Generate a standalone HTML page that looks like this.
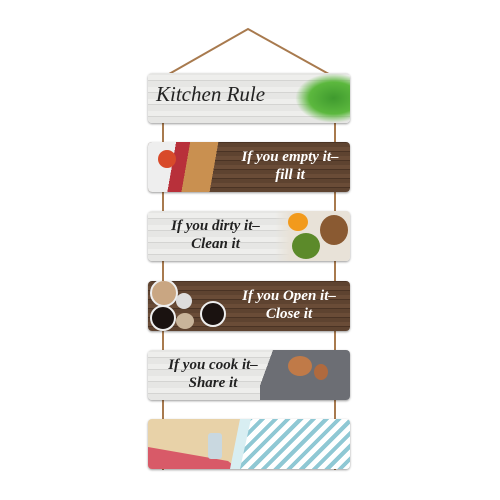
<!DOCTYPE html>
<html><head><style>
body{margin:0;width:500px;height:500px;background:#fff;position:relative;overflow:hidden;font-family:"Liberation Serif",serif;}
.b{position:absolute;left:148px;width:202px;height:50px;border-radius:4px;overflow:hidden;box-shadow:0 1px 2px rgba(0,0,0,.4);}
.r{position:absolute;width:2px;background:#a87a4e;}
.t{position:absolute;font-style:italic;font-weight:bold;text-align:center;line-height:18px;font-size:15px;}
.light{background:repeating-linear-gradient(0deg,#e6e6e4 0 6px,#d4d4d2 6px 7px,#eeeeec 7px 12px);}
.dark{background:repeating-linear-gradient(0deg,#5e4330 0 4px,#4a3324 4px 5px,#6a4c37 5px 9px);}
</style></head><body>
<svg style="position:absolute;left:0;top:0" width="500" height="500"><polyline points="162,78 248,29 336,78" fill="none" stroke="#a87a4e" stroke-width="2"/></svg>
<div class="r" style="left:162px;top:120px;height:350px"></div>
<div class="r" style="left:334px;top:120px;height:350px"></div>

<div class="b light" style="top:73px">
 <div style="position:absolute;right:0;top:0;width:55px;height:50px;background:radial-gradient(ellipse at 70% 50%,#3f9a2e 0,#5cb83e 45%,transparent 70%)"></div>
 <div class="t" style="left:8px;top:12px;font-size:21px;color:#222;font-weight:normal">Kitchen Rule</div>
</div>
<div class="b dark" style="top:142px">
 <div style="position:absolute;left:0;top:0;width:85px;height:50px;background:linear-gradient(100deg,#eee 0 30%,#b8303a 30% 45%,#c99050 45% 75%,transparent 75%)"></div>
 <div style="position:absolute;left:10px;top:8px;width:18px;height:18px;border-radius:50%;background:#d84a2a"></div>
 <div class="t" style="left:82px;width:120px;top:6px;color:#fff">If you empty it–<br>fill it</div>
</div>
<div class="b light" style="top:211px">
 <div style="position:absolute;right:0;top:0;width:75px;height:50px;background:linear-gradient(90deg,transparent 0,#e8e2d8 20%)"></div>
 <div style="position:absolute;right:42px;top:2px;width:20px;height:18px;border-radius:50%;background:#f29a1c"></div>
 <div style="position:absolute;right:30px;top:22px;width:28px;height:26px;border-radius:50%;background:#5c8a2a"></div>
 <div style="position:absolute;right:2px;top:4px;width:28px;height:30px;border-radius:50%;background:#8a5a32"></div>
 <div class="t" style="left:0;width:135px;top:6px;color:#222">If you dirty it–<br>Clean it</div>
</div>
<div class="b dark" style="top:281px">
 <div style="position:absolute;left:2px;top:-2px;width:24px;height:24px;border-radius:50%;background:#c9a682;border:2px solid #eee"></div>
 <div style="position:absolute;left:2px;top:24px;width:22px;height:22px;border-radius:50%;background:#1a1210;border:2px solid #eee"></div>
 <div style="position:absolute;left:28px;top:12px;width:16px;height:16px;border-radius:50%;background:#ddd"></div>
 <div style="position:absolute;left:28px;top:32px;width:18px;height:16px;border-radius:50%;background:#c8b49a"></div>
 <div style="position:absolute;left:52px;top:20px;width:22px;height:22px;border-radius:50%;background:#1a1210;border:2px solid #eee"></div>
 <div class="t" style="left:80px;width:122px;top:6px;color:#fff">If you Open it–<br>Close it</div>
</div>
<div class="b light" style="top:350px">
 <div style="position:absolute;right:0;top:0;width:90px;height:50px;background:linear-gradient(110deg,transparent 0 12%,#6c6e74 12%)"></div>
 <div style="position:absolute;right:38px;top:6px;width:24px;height:20px;border-radius:50%;background:#c07a48"></div>
 <div style="position:absolute;right:22px;top:14px;width:14px;height:16px;border-radius:50%;background:#b06a3e"></div>
 <div class="t" style="left:0;width:130px;top:6px;color:#222">If you cook it–<br>Share it</div>
</div>
<div class="b" style="top:419px;background:#e8d2a8">
 <svg style="position:absolute;left:0;top:0" width="202" height="50"><polygon points="0,28 80,42 90,50 0,50" fill="#d85a68"/><polygon points="92,0 202,0 202,50 82,50" fill="#d8eef2"/></svg>
 <div style="position:absolute;right:0;top:0;width:110px;height:50px;clip-path:polygon(10% 0,100% 0,100% 100%,0 100%);background:repeating-linear-gradient(135deg,#fff 0 5px,#8fc8d4 5px 9px)"></div>
 <div style="position:absolute;left:60px;top:14px;width:14px;height:26px;background:#c9d8e0;border-radius:3px"></div>
</div>
</body></html>
